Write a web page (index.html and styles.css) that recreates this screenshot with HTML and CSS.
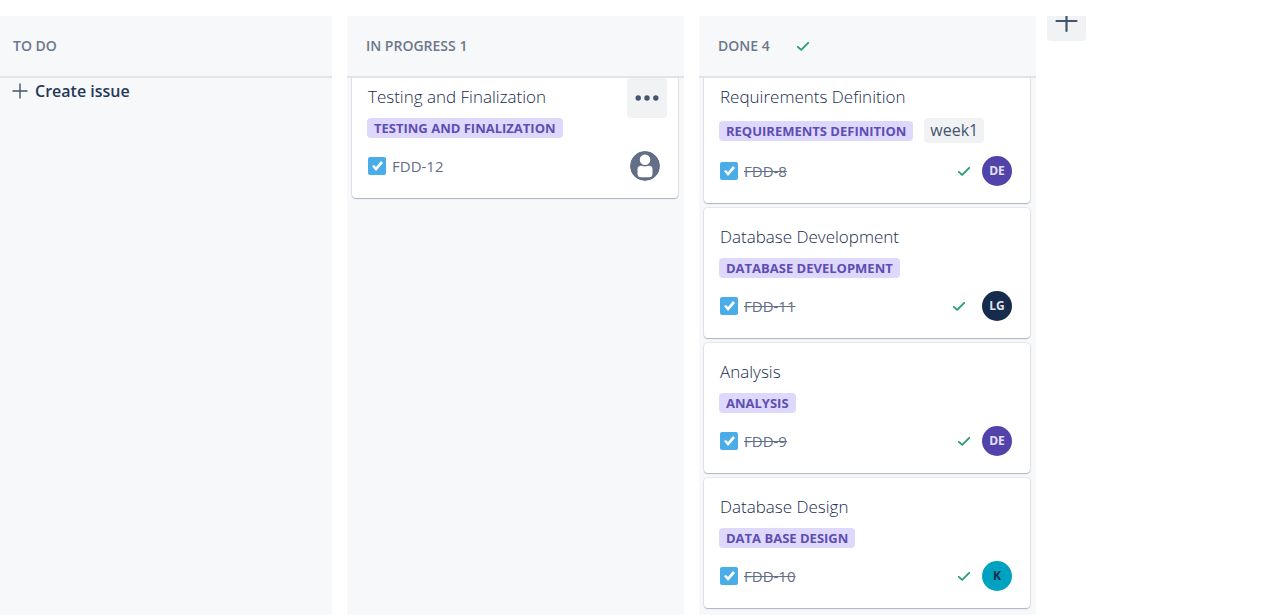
FILE: index.html
```
<!DOCTYPE html>
<html lang="en">
<head>
<meta charset="utf-8">
<title>FDD board</title>
<link rel="stylesheet" href="styles.css">
</head>
<body>
<svg class="sprite" aria-hidden="true">
  <symbol id="check" viewBox="0 0 14 12"><path d="M1.800 6.800 5.200 9.800 12.200 2.800" fill="none" stroke="#22a06b" stroke-width="1.800" stroke-linecap="round" stroke-linejoin="round"/></symbol>
</svg>
<main class="board">
  <section class="column">
    <header class="column-header"><h2 class="column-title">TO DO</h2></header>
    <div class="column-body">
      <button class="create" type="button">
        <svg class="create-icon" viewBox="0 0 16 16" aria-hidden="true"><path d="M8 1v14M1 8h14" stroke="#44546f" stroke-width="1.4" stroke-linecap="round"/></svg>
        Create issue
      </button>
    </div>
  </section>

  <section class="column column-spaced">
    <header class="column-header"><h2 class="column-title">IN PROGRESS 1</h2></header>
    <div class="column-body">
      <div class="cards">
        <article class="card">
          <h3 class="card-title">Testing and Finalization</h3>
          <div class="tags"><span class="tag">TESTING AND FINALIZATION</span></div>
          <div class="card-footer">
            <input class="tick" type="checkbox" id="fdd-12" checked>
            <label class="key" for="fdd-12">FDD-12</label>
            <svg class="avatar" viewBox="0 0 30 30" role="img" aria-label="Unassigned"><circle cx="15" cy="15" r="15" fill="#626f86"/><rect x="7.500" y="14.800" width="15" height="11.500" rx="3.500" fill="#fff"/><circle cx="15" cy="8.800" r="6" fill="#fff" stroke="#626f86" stroke-width="1.500"/></svg>
          </div>
          <button class="more" type="button" aria-label="More actions">
            <svg class="more-icon" viewBox="0 0 24 6" aria-hidden="true"><g fill="#44546f"><circle cx="3.200" cy="3" r="2.700"/><circle cx="12" cy="3" r="2.700"/><circle cx="20.800" cy="3" r="2.700"/></g></svg>
          </button>
        </article>
      </div>
    </div>
  </section>

  <section class="column column-spaced">
    <header class="column-header">
      <h2 class="column-title">DONE 4</h2>
      <svg class="check"><use href="#check"/></svg>
    </header>
    <div class="column-body">
      <div class="cards">
        <article class="card">
          <h3 class="card-title">Requirements Definition</h3>
          <div class="tags"><span class="tag">REQUIREMENTS DEFINITION</span><span class="label">week1</span></div>
          <div class="card-footer">
            <input class="tick" type="checkbox" id="fdd-8" checked>
            <label class="key key-done" for="fdd-8">FDD-8</label>
            <svg class="check"><use href="#check"/></svg>
            <span class="avatar avatar-purple">DE</span>
          </div>
        </article>
        <article class="card">
          <h3 class="card-title">Database Development</h3>
          <div class="tags"><span class="tag">DATABASE DEVELOPMENT</span></div>
          <div class="card-footer card-footer-wide">
            <input class="tick" type="checkbox" id="fdd-11" checked>
            <label class="key key-done" for="fdd-11">FDD-11</label>
            <svg class="check"><use href="#check"/></svg>
            <span class="avatar avatar-navy">LG</span>
          </div>
        </article>
        <article class="card">
          <h3 class="card-title">Analysis</h3>
          <div class="tags"><span class="tag">ANALYSIS</span></div>
          <div class="card-footer">
            <input class="tick" type="checkbox" id="fdd-9" checked>
            <label class="key key-done" for="fdd-9">FDD-9</label>
            <svg class="check"><use href="#check"/></svg>
            <span class="avatar avatar-purple">DE</span>
          </div>
        </article>
        <article class="card">
          <h3 class="card-title">Database Design</h3>
          <div class="tags"><span class="tag">DATA BASE DESIGN</span></div>
          <div class="card-footer">
            <input class="tick" type="checkbox" id="fdd-10" checked>
            <label class="key key-done" for="fdd-10">FDD-10</label>
            <svg class="check"><use href="#check"/></svg>
            <span class="avatar avatar-teal">K</span>
          </div>
        </article>
      </div>
    </div>
  </section>

  <div class="add-slot">
    <button class="add" type="button" aria-label="Add column">
      <svg class="add-icon" viewBox="0 0 24 25" aria-hidden="true"><path d="M11.500 -4v19M1.500 5h20" stroke="#44546f" stroke-width="2.200" stroke-linecap="round"/></svg>
    </button>
  </div>
</main>
</body>
</html>
```
FILE: styles.css
```
* { box-sizing: border-box; }

body {
  margin: 0;
  background: #fff;
  color: #44546f;
  font-family: "Open Sans", "Noto Sans", sans-serif;
}

button { font: inherit; border: 0; cursor: pointer; }

.sprite { display: none; }

.board {
  display: grid;
  grid-template-columns: minmax(0, 332fr) minmax(0, 341fr) minmax(0, 341fr) minmax(0, 229fr);
  column-gap: 11px;
  min-height: 100vh;
  padding-top: 16px;
}

.column { background: #f7f8f9; min-width: 0; }
.column-spaced { margin-left: 4px; }

.column-header {
  display: flex;
  align-items: center;
  gap: 26px;
  height: 62px;
  padding-left: 19px;
  border-bottom: 2px solid #e2e4e8;
}
.column:first-child .column-header { padding-left: 13px; }

.column-title {
  margin: 0;
  color: #6b778c;
  font-size: 14px;
  font-weight: 600;
  line-height: 20px;
}

.column-body { overflow: hidden; padding: 0 6px 6px 5px; }

.create {
  display: flex;
  align-items: center;
  gap: 7px;
  padding: 1px 7px;
  background: none;
  color: #253858;
  font-size: 16px;
  font-weight: 600;
  line-height: 24px;
}
.create-icon { width: 16px; height: 16px; }

/* The list is scrolled slightly under the column header. */
.cards {
  display: flex;
  flex-direction: column;
  gap: 5px;
  margin-top: -10px;
}

.card {
  position: relative;
  padding: 16px 18px 17px 16px;
  border-radius: 4px;
  background: #fff;
  box-shadow: 0 1px 1px #091e4240, 0 0 1px 1px #091e4214;
}

.card-title {
  margin: 0 0 9px;
  color: #172b4d;
  font-size: 17px;
  font-weight: 300;
  line-height: 25px;
}

.tags { display: flex; align-items: center; gap: 11px; margin: 0 0 13px -1px; }

.tag {
  padding: 0 7px;
  border-radius: 4px;
  background: #dfd8fd;
  color: #5e4db2;
  font-size: 13px;
  font-weight: 700;
  line-height: 20px;
  white-space: nowrap;
}

.label {
  padding: 0 6px;
  border-radius: 4px;
  background: #f1f2f4;
  font-size: 16px;
  line-height: 25px;
}

.card-footer { display: flex; align-items: center; }

.tick {
  appearance: none;
  width: 18px;
  height: 18px;
  margin: 0 6px 0 0;
  border-radius: 2px;
  background: #4bade8;
}
.tick::before {
  content: "";
  display: block;
  width: 18px;
  height: 18px;
  background: #fff;
  clip-path: polygon(4px 9px, 6px 8px, 8px 10px, 13px 4px, 15px 6px, 8px 14px);
}

.key { margin-right: auto; color: #626f86; font-size: 15px; line-height: 20px; }
.key-done { text-decoration: line-through; }

.check { width: 14px; height: 12px; }
.card-footer .check { margin-right: 11px; }
.card-footer-wide .check { margin-right: 16px; }

.avatar {
  width: 30px;
  height: 30px;
  border-radius: 50%;
  font-size: 12px;
  font-weight: 700;
  line-height: 30px;
  text-align: center;
}
.avatar-purple { background: #5243aa; color: #e3e0f3; }
.avatar-navy { background: #172b4d; color: #dfe3ea; }
.avatar-teal { background: #00a3bf; color: #172b4d; }

.more {
  position: absolute;
  top: 10px;
  right: 11px;
  width: 40px;
  height: 40px;
  padding: 0 8px;
  border-radius: 4px;
  background: #f1f2f4;
}
.more-icon { display: block; width: 24px; height: 6px; }

.add {
  display: block;
  width: 39px;
  height: 25px;
  padding: 0 8px;
  border-radius: 0 0 4px 4px;
  background: #f1f2f4;
}
.add-icon { display: block; width: 24px; height: 25px; }
```
